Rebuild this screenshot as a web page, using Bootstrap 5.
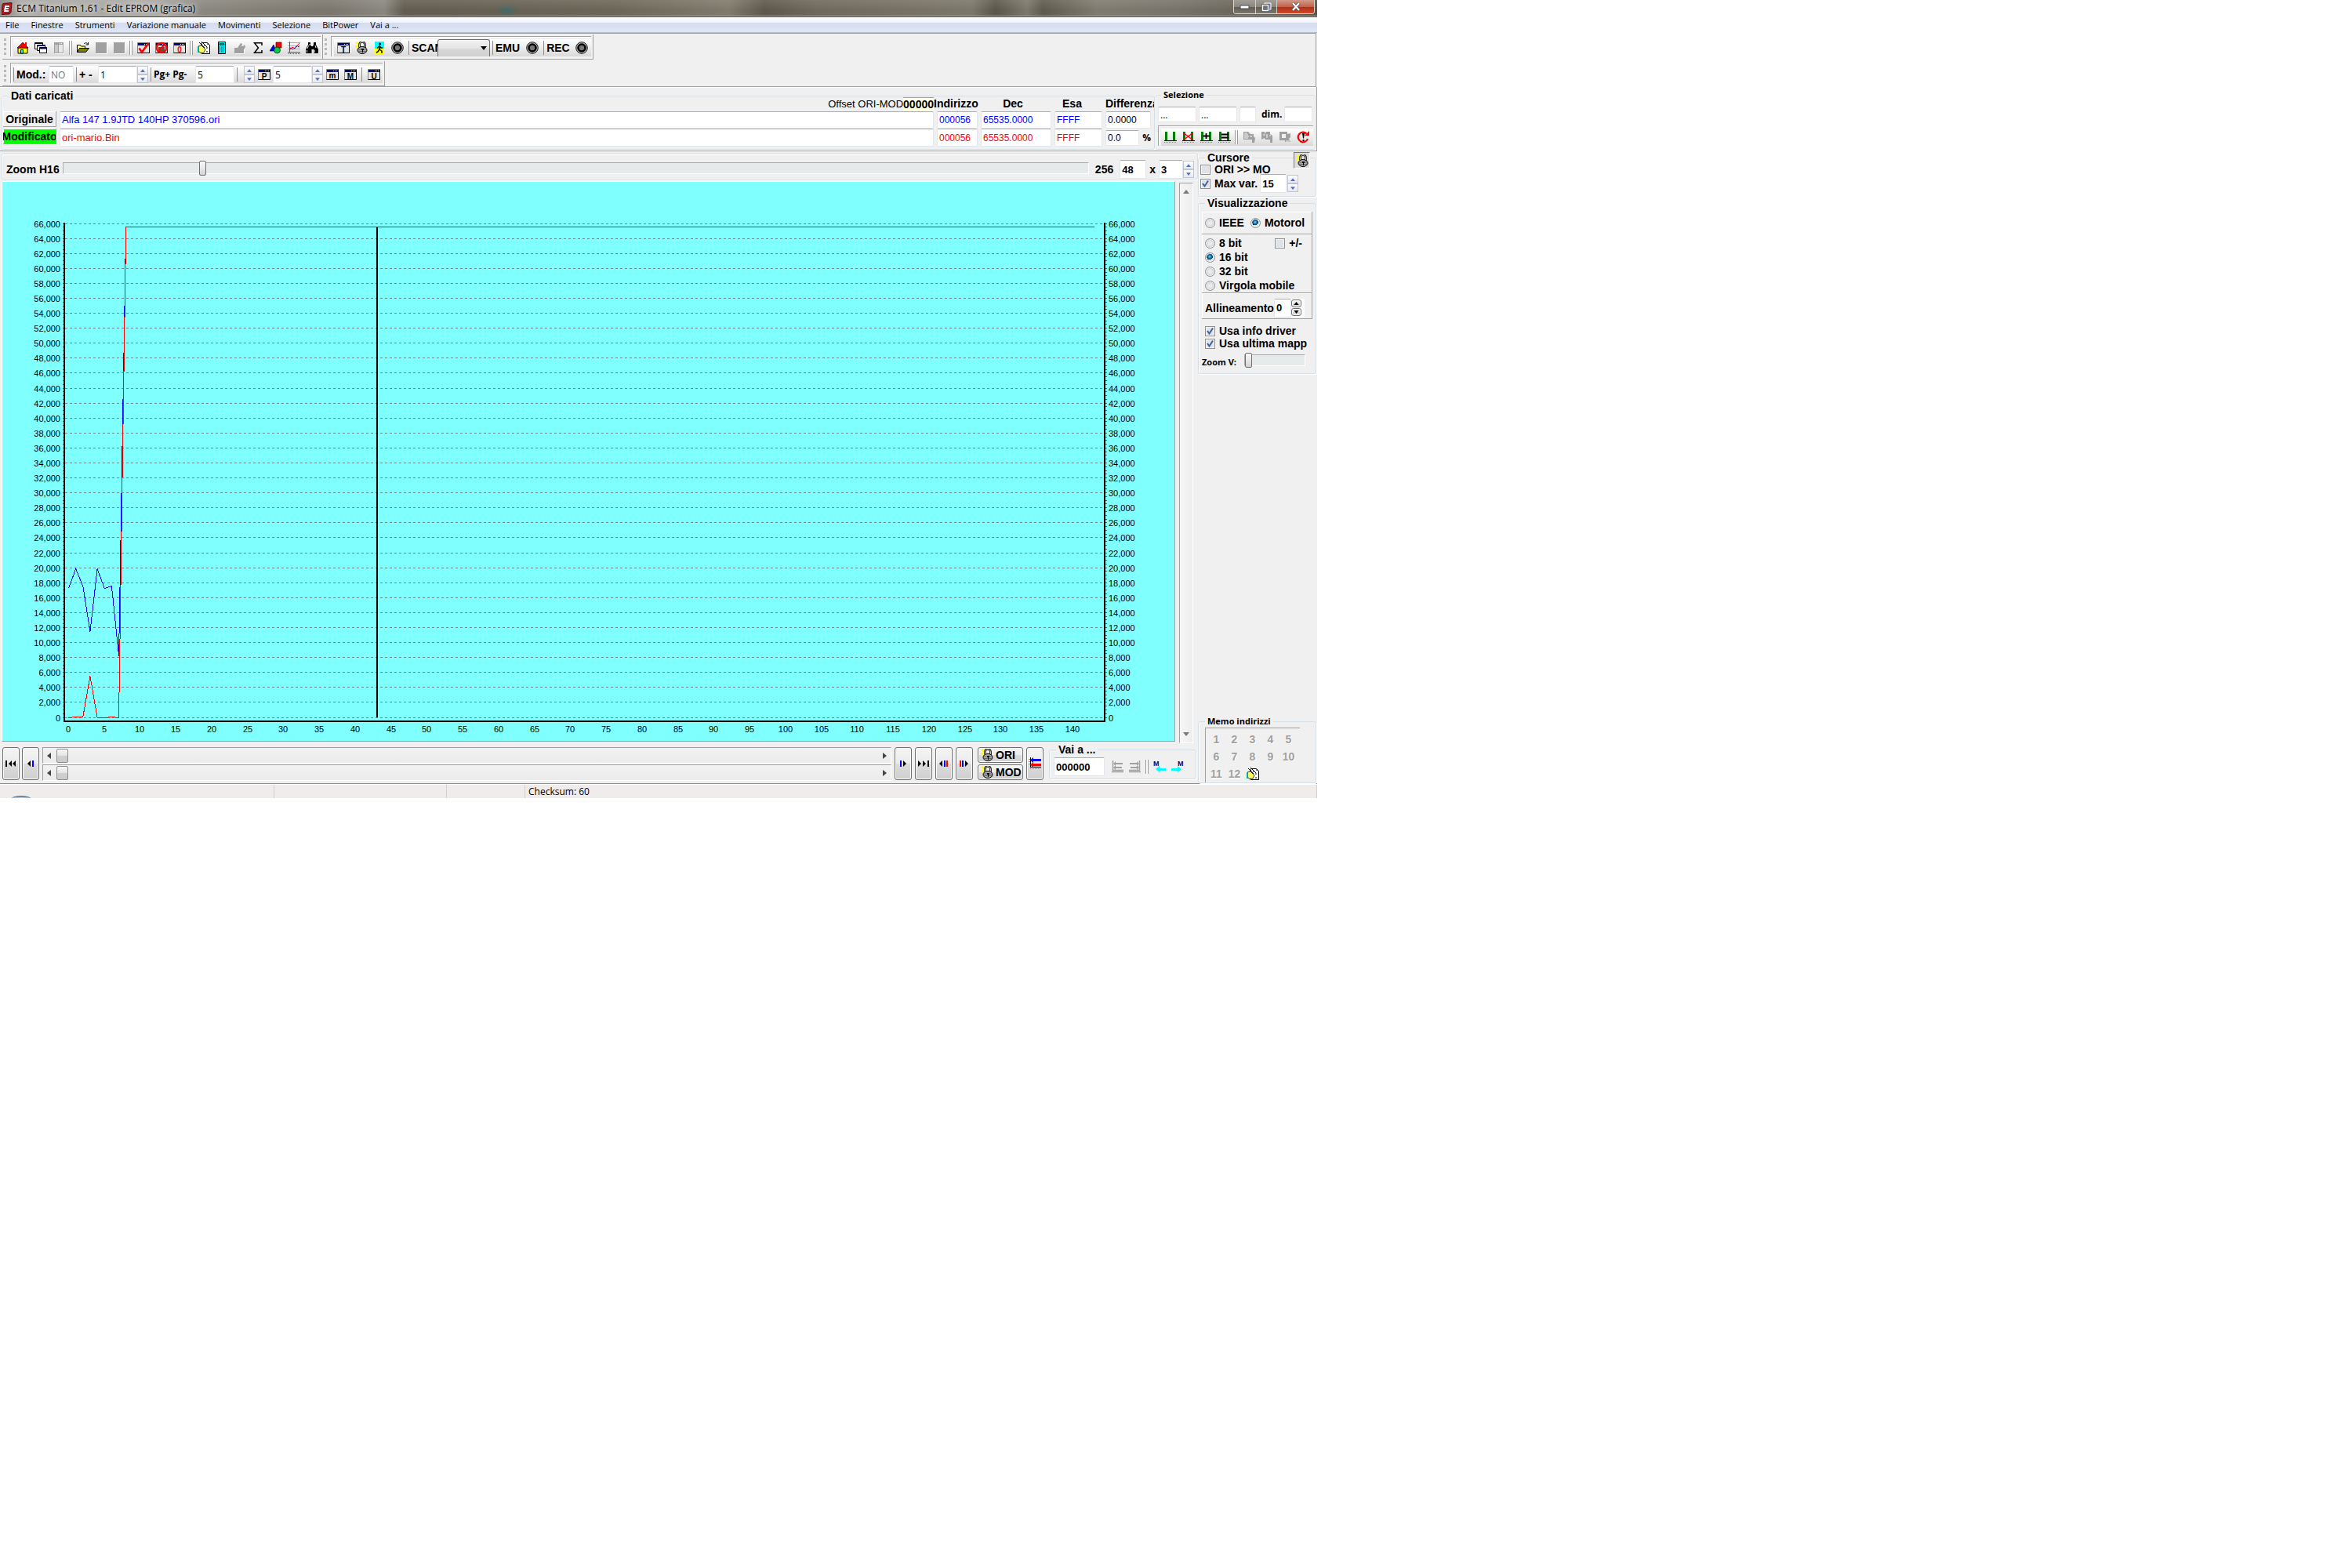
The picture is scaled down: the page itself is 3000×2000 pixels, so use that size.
<!DOCTYPE html>
<html lang="it">
<head>
<meta charset="utf-8">
<meta name="viewport" content="width=device-width, initial-scale=1">
<title>ECM Titanium 1.61 - Edit EPROM (grafica)</title>
<link href="https://cdn.jsdelivr.net/npm/bootstrap@5.3.0/dist/css/bootstrap.min.css" rel="stylesheet">
<style>
:root{--face:#f0f0f0;--edge:#a0a0a0;--groove:#d5dfe5;--bitmap:"Liberation Sans",Arial,sans-serif;--ui:"Open Sans","Noto Sans",sans-serif}
body{background:#fff;color:#000;font:bold 14px/16px var(--bitmap)}
button,input,select{font:inherit;color:inherit;border-radius:0}
.ecm-window{width:56%;background:var(--face)}
/* title bar */
.titlebar{height:22px;border-bottom:1px solid #33312c;font:12px/21px var(--ui);padding-left:2px;
 background:linear-gradient(#ffffff1a 0 0,#0000 60%),radial-gradient(ellipse 14px 8px at 646px 13px,#3f6a68,#0000),linear-gradient(90deg,#8d8a85 0,#aaa9a4 30px,#a8a6a1 200px,#8a877f 260px,#7b776e 420px,#8a877f 490px,#625d50 515px,#6b6658 780px,#7f7a6c 930px,#5d584b 975px,#6e695c 1040px,#7b7769 1240px,#5a5649 1270px,#7c786b 1310px,#5e5a4d 1330px,#807b6f 1400px,#77736a 1500px,#5b5649 100%);box-shadow:inset 0 -1px #c6c4bc}
.titlebar .caption{text-shadow:0 0 6px #fff,0 0 6px #ddd;margin-left:5px}
.winbtns{margin-right:3px;height:18px;border:1px solid #d9d7d0;border-top:0;border-radius:0 0 4px 4px;overflow:hidden;background:#444}
.winbtns button{width:28px;border:0;border-right:1px solid #d0cec6;background:linear-gradient(#a09d94,#8b887f 50%,#605c52 52%,#7b776c);padding:0;line-height:0}
.winbtns button:nth-child(2){width:27px}
.winbtns button.closer{width:47px;border:0;background:linear-gradient(#d09a8a,#c4624a 50%,#b32d12 52%,#cf4a2c)}
/* menu */
.menubar{height:20px;padding-left:7px;gap:15px;background:linear-gradient(#fff 0,#eef2fb 35%,#d5dcef 40%,#dfe6f7 100%);border-bottom:1px solid #b3bac9;font:11px/19px var(--ui)}
.menubar a{color:#000;text-decoration:none}
/* toolbars */
.toolzone{border:1px solid var(--edge);border-width:1px 1px 1px 0;margin-right:1px;padding:1px 0 0 3px;gap:2px}
.band{position:relative;padding:2px 2px 3px 10px;border:1px solid var(--edge);border-width:0 1px 1px 0}
.band::before{content:"";width:3px;margin:3px 5px 2px -8px;background:repeating-linear-gradient(#b8b8b8 0 3px,#0000 3px 6px)}
.band-in{border:1px solid var(--edge);border-width:1px 0 0 1px;box-shadow:inset 1px 1px #fff;padding:3px 0 0 3px}
.strip{height:22px;background:linear-gradient(#fff,#d9d9d9)}
.tb{width:23px;height:22px;padding:0;border:0;background:none;display:flex;align-items:center;justify-content:center;flex:none}
.tb svg,.tool svg,.mm svg{width:16px;height:16px}
.sep2{width:8px;height:18px;flex:none;background:linear-gradient(90deg,#0000 2px,#999 2px 3px,#fff 3px 5px,#999 5px 6px,#0000 6px)}
.sep1{width:1px;height:18px;background:#8c8c8c;flex:none;margin:0 3px}
.scan{width:33px;overflow:hidden}
.pick{width:67px;height:22px;padding:0;border:1px solid #707070;border-bottom:0;border-radius:3px 3px 0 0;background:linear-gradient(#f2f2f2,#e4e4e4 50%,#d8d8d8 52%,#d0d0d0);appearance:none}
.pickwrap{position:relative}
.pickwrap svg{position:absolute;right:4px;top:9px;width:8px;height:5px;pointer-events:none}
.field{background:#fff;border:1px solid #e2e7ee;border-top-color:#abadb3;padding:0 2px;font:13px/18px var(--bitmap);min-width:0;border-radius:2px}
.ui{font-family:var(--ui);font-size:12px}
.bar-field{height:22px;width:50px}
.spin{width:14px;flex:none}
.spin button{flex:1;padding:0;border:1px solid #c2c5cf;background:linear-gradient(#fdfdff,#e6e8f0);line-height:0;display:flex;align-items:center;justify-content:center;min-height:0}
.spin svg{width:6px;height:4px;fill:#5572b8}
/* group boxes */
.gbox{border:1px solid var(--groove);border-radius:3px;box-shadow:1px 1px #fff,inset 1px 0 #fff;min-width:0;position:relative}
.gbox>legend{float:none;width:auto;margin:0 0 0 8px;padding:0 3px;font:inherit;line-height:16px}
.gbox>legend.small-cap{font:bold 11px/14px var(--ui)}
.datapanel{border:1px solid var(--edge);border-width:0 1px 1px 0;box-shadow:inset 0 1px #fff;padding:3px 1px 1px 2px;gap:1px}
.datagrid{display:grid;grid-template-columns:68px minmax(0,1fr) 52px 90px 61px 58px;grid-template-rows:18px 22px 23px;column-gap:4px;margin-top:-6px;padding:0 4px 3px 1px}
.datagrid .field{width:100%;font-size:12px}
.datagrid .fname{font-size:13px}
.offs{justify-self:end;font-weight:normal;font-size:13px}
.offs b{font-size:14px;line-height:16px;background:#ffffe1;border-top:1px solid var(--edge);height:18px}
.tag{border:1px solid var(--edge);border-width:0 1px 1px 0;box-shadow:inset 1px 1px #fff;background:var(--face);padding:0;overflow:hidden;display:flex;align-items:center;justify-content:center;height:20px;margin-bottom:2px}
.tag.on{background:#0f0}
.blue{color:#00f}.red{color:#f00}
.selbox{width:204px;flex:none;padding:0 2px}
.selbox>legend{margin-left:4px}
/* sliders */
.slide{appearance:none;-webkit-appearance:none;height:20px;background:none;min-width:0;margin:0}
.slide::-webkit-slider-runnable-track{height:15px;background:#e7eaea;border:1px solid #fff;border-color:#a9acac #fff #fff #a9acac}
.slide::-webkit-slider-thumb{-webkit-appearance:none;width:9px;height:19px;margin-top:-3px;border:1px solid #707070;border-radius:2px;background:linear-gradient(#f8f8f8,#e8e8e8 50%,#d2d2d2)}
.zoomrow{margin:2px 0 0 2px;border:1px solid var(--groove);border-radius:3px;box-shadow:1px 1px #fff,inset 1px 1px #fff;height:34px;padding:8px 4px 0 5px}
.zoomrow .slide{margin-top:-3px}
.plotrow{padding:2px 6px 0 2px;gap:5px}
.plot{background:#80ffff;border:1px solid #fff;border-color:#fff var(--edge) var(--edge) #fff}
.plot svg{display:block;width:100%}
.plot text{font:11px var(--bitmap)}
.vbar{width:18px;flex:none;margin-top:2px;margin-bottom:-2px;border:1px solid var(--edge);border-color:var(--edge) #fff #fff var(--edge);background:linear-gradient(90deg,#f6f6f6,#ededed)}
.vbar button,.hbar button{border:0;background:none;padding:0;line-height:0}
.vbar svg{width:8px;height:5px;fill:#7a7a7a}
.navrow{padding:7px 2px 3px 3px;gap:4px}
.nb{padding:0;border:1px solid #707070;border-radius:3px;background:linear-gradient(#f4f4f4,#ebebeb 50%,#dcdcdc 51%,#cfcfcf);box-shadow:inset 0 0 0 1px #fafafa;display:flex;align-items:center;justify-content:center;overflow:hidden}
.nb.tall{width:22px;height:42px}
.nb.wide{width:58px;height:20px;gap:3px;padding-left:3px;justify-content:flex-start}
.nb.mini{width:13px;height:10px}
.nb svg{flex:none}
.hbar{height:21px;border:1px solid var(--edge);border-color:var(--edge) #fff #fff var(--edge);background:linear-gradient(#f2f2f2,#ebebeb);padding:0 5px}
.hbar svg{width:5px;height:8px;fill:#444}
.hthumb{width:15px;height:18px;border:1px solid #8e8e8e;border-radius:2px;background:linear-gradient(#f6f6f6,#e4e4e4 50%,#d0d0d0 52%,#cacaca);margin-left:7px}
.vai{width:188px;margin:-5px 0 0 3px}
/* side column */
.side{width:152px;flex:none}
.side .gbox{margin-right:1px}
.lockbtn{position:absolute;right:7px;top:-15px;width:21px;height:21px;padding:0;border:1px solid #777;border-color:#777 #fff #fff #777;background:#dedede;display:flex;align-items:center;justify-content:center}
.lockbtn svg{width:16px;height:16px}
.subp{border:1px solid var(--edge);border-width:0 1px 1px 0;box-shadow:inset 1px 1px #fff;padding-left:4px}
.form-check-input.ck{width:13px;height:13px;margin:0;flex:none;border:1px solid #8e8f8f;box-shadow:inset 0 0 0 1px #f4f4f4;background-color:#dfe2e6;border-radius:0;background-size:11px 11px}
.form-check-input.ck:checked{background-color:#dfe2e6;background-image:url("data:image/svg+xml,%3Csvg xmlns='http://www.w3.org/2000/svg' viewBox='0 0 11 11'%3E%3Cpath d='M2 5l2.500 3.500L9 1.500' fill='none' stroke='%23445fa5' stroke-width='2'/%3E%3C/svg%3E")}
.form-check-input.ck[type=radio]{border-radius:50%;background-image:radial-gradient(circle,#e9ebed 2px,#cdd0d3 5px)}
.form-check-input.ck[type=radio]:checked{background-image:radial-gradient(circle at 45% 40%,#8fd6f5 0,#1878b4 2px,#0b2f52 4px,#dfe3e6 4px)}
.opt{height:18px;gap:5px;white-space:nowrap}
.opt.tight{height:16px}
.cursor-rows{padding:0 3px 5px 2px}
.clipx{overflow:hidden;white-space:nowrap}
.memo{display:grid;grid-template-columns:repeat(5,23px);grid-auto-rows:22px;border:1px solid var(--edge);border-width:1px 0 0 1px;margin:1px 20px 0 8px;padding:3px 0 0 2px}
.mm{border:0;background:none;padding:0;color:#a0a0a0;text-shadow:1px 1px #fff;display:flex;align-items:center;justify-content:center}
.status{border-top:1px solid #8c8c8c;background:#f0ecec;height:19px;font:12px/17px var(--ui);box-shadow:inset 0 1px #fff}
.status>div{border-right:1px solid #d2cfcf;margin-top:1px}
.orb{width:24px;height:4px;border-radius:14px 14px 0 0/4px 4px 0 0;border-top:1px solid #33597f;background:#a9c4dc;margin:14px 0 0 15px}
</style>
<script src="https://cdn.jsdelivr.net/npm/bootstrap@5.3.0/dist/js/bootstrap.bundle.min.js"></script>
</head>
<body>
<svg class="d-none" xmlns="http://www.w3.org/2000/svg">
 <symbol id="i-home" viewBox="0 0 16 16"><path d="M2 8h12v7H2z" fill="#ff0" stroke="#000"/><path d="M8 1L1 8h14z" fill="#f00" stroke="#000" stroke-width=".6"/><path d="M11 1h2v4h-2z" fill="#f00"/><path d="M5.500 10.500h3v4.500h-3z" fill="#0ff" stroke="#000"/></symbol>
 <symbol id="i-wins" viewBox="0 0 16 16"><g fill="#fff" stroke="#000"><path d="M.5 1.500h10v8H.5z"/><path d="M3.500 4.500h10v7h-10z"/><path d="M6.500 7.500h9v7h-9z"/></g><path d="M1 2h9v1H1zM4 5h9v1H4zM7 8h8v1.500H7z" fill="#000080"/></symbol>
 <symbol id="i-gdoc" viewBox="0 0 16 16"><path d="M2 1h12v14H2z" fill="#a0a0a0"/><path d="M3 4h4v10H3z" fill="#c8c8c8"/><path d="M8 4h5v10H8z" fill="#e8e8e8"/><path d="M9 2h1v1H9zM11 2h1v1h-1z" fill="#fff"/><path d="M14.500 2v13.500H3" stroke="#fff" fill="none"/></symbol>
 <symbol id="i-open" viewBox="0 0 16 16"><path d="M.5 13.500v-9h4l1 1.500h5v3" fill="#ffff80" stroke="#000"/><path d="M.5 13.500l3-5h12l-4 5z" fill="#808000" stroke="#000"/><path d="M9 3c2-2 4-1.500 5 .5M14.500 1v3h-3" fill="none" stroke="#000"/></symbol>
 <symbol id="i-gray" viewBox="0 0 16 16"><path d="M1 1h14v14H1z" fill="#a0a0a0"/><path d="M15.500 2v13.500H2" stroke="#fff" fill="none"/></symbol>
 <symbol id="i-win" viewBox="0 0 16 16"><path d="M.5 1.500h15v13H.5z" fill="#e4e4e4" stroke="#808080"/><path d="M15.500 1.500v13H.5" fill="none" stroke="#000"/><path d="M1 2h14v3H1z" fill="#000080"/><path d="M9 3h1v1H9zM11 3h1v1h-1zM13 3h1v1h-1z" fill="#fff"/></symbol>
 <symbol id="i-check" viewBox="0 0 16 16"><use href="#i-win"/><path d="M2.500 8.500L6 13.500L14.500 2" fill="none" stroke="#f00" stroke-width="2.600"/></symbol>
 <symbol id="i-no" viewBox="0 0 16 16"><use href="#i-win"/><path d="M4 7h8v6H4z" fill="#804040"/><circle cx="8" cy="8" r="6.200" fill="none" stroke="#f00" stroke-width="2.200"/><path d="M12.500 3.500l-9 9" stroke="#f00" stroke-width="2.200"/></symbol>
 <symbol id="i-hand" viewBox="0 0 16 16"><path d="M5.500 1.500h7l3 3v11h-10z" fill="#fff" stroke="#000"/><path d="M8 5h2M11 8h2M8 11h1M11 13h2M12 3h2" stroke="#000"/><path d="M1 6l4-1 5 5-2 4-4 .5L1 12z" fill="#ffff60" stroke="#000" stroke-width=".8"/><path d="M2 1l7 7M5 0l7 7" stroke="#000"/><path d="M0 7h2v7H0z" fill="#0aa"/></symbol>
 <symbol id="i-calc" viewBox="0 0 16 16"><path d="M3.500.5h9v15h-9z" fill="#0ff" stroke="#000"/><path d="M5 2.500h6v2H5z" fill="#008080" stroke="#000" stroke-width=".6"/><path d="M5.500 6v8M8 6v8M10.500 6v8" stroke="#006080"/></symbol>
 <symbol id="i-tool" viewBox="0 0 16 16"><path d="M1 8h4l4-6 2 1-1 3h2l2-2 1 3-2 3v5H1z" fill="#a0a0a0"/><path d="M2 15.500h12M13.500 10v5" stroke="#fff"/></symbol>
 <symbol id="i-sum" viewBox="0 0 16 16"><path d="M13 5V1.700H3.500L8.500 8l-5 6.300H13V11" fill="none" stroke="#000" stroke-width="1.500"/></symbol>
 <symbol id="i-shapes" viewBox="0 0 16 16"><path d="M8 1h7v7H8z" fill="#f00" stroke="#000" stroke-width=".6"/><path d="M5 4L0 12h8z" fill="#00f" stroke="#000" stroke-width=".6"/><circle cx="9.500" cy="11" r="4" fill="#0c4" stroke="#000" stroke-width=".6"/></symbol>
 <symbol id="i-graph" viewBox="0 0 16 16"><path d="M0 1.500h16M0 5.500h16M0 9.500h16" stroke="#aaa"/><path d="M2.500 0v14.500M0 13.500h16" stroke="#555"/><path d="M2 11l4-4 3 2 6-7" stroke="#f00" fill="none"/><path d="M3 8l4 2 4-4 4 1" stroke="#00f" fill="none" stroke-dasharray="2 1"/><path d="M1 15.500h15" stroke="#555" stroke-dasharray="1 1"/></symbol>
 <symbol id="i-bino" viewBox="0 0 16 16"><path d="M3 1h3v3l1 2h2l1-2V1h3v3l3 6v5h-5.500v-5h-3v5H0v-5l3-6z" fill="#000"/><path d="M3.500 5L2 9M12 5l1 3M1.500 11v3M11 11v3M5 3v2" stroke="#fff" stroke-width=".9"/></symbol>
 <symbol id="i-lock" viewBox="0 0 16 16"><path d="M5 0v3M0 1l4 3M0 6h4M2 0l3 4M1 9l3-3" stroke="#ff0" stroke-width="1.300"/><path d="M5.500 7.500V4a3.500 3.500 0 017 0v4" fill="none" stroke="#000" stroke-width="2.600"/><path d="M5.500 7V4a3.500 3.500 0 017 0v4" fill="none" stroke="#ddd" stroke-width=".9"/><ellipse cx="9" cy="11" rx="6" ry="4.500" fill="#a8a8a8" stroke="#000"/><path d="M3.500 10h11M3.500 12.500h11" stroke="#555" stroke-width=".8"/><path d="M8 9h3v2h-1v3H9v-3H8z" fill="#000"/></symbol>
 <symbol id="i-walk" viewBox="0 0 16 16"><path d="M2 0h12v9H2z" fill="#0ff"/><path d="M2 9h12v7H2z" fill="#ff0"/><circle cx="8.500" cy="3" r="1.500"/><path d="M8 5v5l3 2v3M8 10l-2 3-2 1M8 5.500L5 8.500M8 5.500l2 2.500h2" fill="none" stroke="#000" stroke-width="1.400"/></symbol>
 <symbol id="i-disc" viewBox="0 0 16 16"><circle cx="8" cy="8" r="7.300" fill="#bbb" stroke="#000" stroke-width=".9"/><circle cx="8" cy="8" r="4.500" fill="#777" stroke="#000" stroke-width="2.600"/></symbol>
 <symbol id="i-sel" viewBox="0 0 16 16"><path d="M1 1h3v11H1zM11 1h3v11h-3z" fill="#008000"/><path d="M0 12.500h16" stroke="#000"/><path d="M0 14.500h16" stroke="#888" stroke-dasharray="1 1"/></symbol>
 <symbol id="i-selx" viewBox="0 0 16 16"><use href="#i-sel"/><path d="M1 2l13 10M14 2L1 12" stroke="#f00" stroke-width="1.400"/></symbol>
 <symbol id="i-selp" viewBox="0 0 16 16"><use href="#i-sel"/><path d="M3 6.500h9M7.500 3v7" stroke="#000" stroke-width="1.800"/></symbol>
 <symbol id="i-sele" viewBox="0 0 16 16"><use href="#i-sel"/><path d="M4 4.500h9M4 8.500h9" stroke="#000" stroke-width="1.800"/></symbol>
 <symbol id="i-g1" viewBox="0 0 16 16"><path d="M1 1h6l3 3h4v3l2 2-1 6h-3v-4H1z" fill="#a0a0a0"/><path d="M2 3h4M2 5h5M2 7h6M2 9h5M9 7h3" stroke="#f4f4f4"/></symbol>
 <symbol id="i-g2" viewBox="0 0 16 16"><path d="M1 1h4v3l2-3h5v3l3 2v9h-3v-4H6l-1-2-4 2z" fill="#a0a0a0"/><path d="M3 5h3M8 4v5M11 6h2" stroke="#f4f4f4"/></symbol>
 <symbol id="i-g3" viewBox="0 0 16 16"><path d="M1 1h10v3l4-1v5l-2 2 2 4H8v-2H1z" fill="#a0a0a0"/><path d="M4 4h5v5H4z" fill="#f0f0f0"/><path d="M9 13h5" stroke="#f4f4f4"/></symbol>
 <symbol id="i-ref" viewBox="0 0 16 16"><path d="M12.500 3.500A6.300 6.300 0 1014 10" fill="none" stroke="#f00" stroke-width="2.200"/><path d="M10 6h6V0z" fill="#f00"/><path d="M7 3h3L9 9.500H8zM7.500 11h2v2h-2z" fill="#000"/></symbol>
 <symbol id="i-cmp" viewBox="0 0 16 16"><path d="M2.500 0v13M2 12.500h14" stroke="#000"/><path d="M0 2.500h2M0 5.500h2M0 8.500h2" stroke="#888"/><path d="M2 14.500h14" stroke="#888" stroke-dasharray="1 1"/><path d="M2 3.500l4-3.500v2h10v3H6v2z" fill="#00f"/><path d="M2 9.500L6 6v2h10v3H6v2z" fill="#f00"/></symbol>
 <symbol id="i-gl" viewBox="0 0 16 16"><path d="M2.500 0v12.500H16M1 14.500h15" stroke="#a0a0a0" stroke-width="1.500" fill="none"/><path d="M3 4l3-3v2h9v2H6v2zM3 9l3-3v2h8v2H6v2z" fill="#a0a0a0"/></symbol>
 <symbol id="i-gr" viewBox="0 0 16 16"><path d="M13.500 0v12.500H0M0 14.500h15" stroke="#a0a0a0" stroke-width="1.500" fill="none"/><path d="M13 4l-3-3v2H1v2h9v2zM13 9l-3-3v2H2v2h8v2z" fill="#a0a0a0"/></symbol>
 <symbol id="i-up" viewBox="0 0 8 5"><path d="M4 0l4 5H0z"/></symbol>
 <symbol id="i-dn" viewBox="0 0 8 5"><path d="M4 5l4-5H0z"/></symbol>
</svg>

<main class="ecm-window">
 <header class="titlebar d-flex align-items-start justify-content-between">
  <div class="d-flex align-items-center">
   <svg width="14" height="16" viewBox="0 0 14 16"><path d="M2 1.500l11-1-1 12-2 2.500-10 .5 1-12z" fill="#b3181c" stroke="#5a1012"/><path d="M10 5H5L4 11h5M5 8h4" fill="none" stroke="#fff" stroke-width="1.800"/></svg>
   <span class="caption">ECM Titanium 1.61 - Edit EPROM (grafica)</span>
  </div>
  <div class="winbtns d-flex">
   <button aria-label="Riduci"><svg width="13" height="6"><path d="M1 1h11v4H1z" fill="#fff" stroke="#444b5c"/></svg></button>
   <button aria-label="Ripristina"><svg width="13" height="12"><path d="M4 1h8v8H4z" fill="#888" stroke="#fff"/><path d="M1.500 3.500h7v7h-7z" fill="#777" stroke="#444b5c" stroke-width="3"/><path d="M1.500 3.500h7v7h-7z" fill="none" stroke="#fff" stroke-width="1.600"/></svg></button>
   <button class="closer" aria-label="Chiudi"><svg width="12" height="11"><path d="M2 1l8 9M10 1L2 10" stroke="#444b5c" stroke-width="4"/><path d="M2 1l8 9M10 1L2 10" stroke="#fff" stroke-width="2.400"/></svg></button>
  </div>
 </header>
 <nav class="menubar d-flex" aria-label="Menu">
  <a href="#">File</a><a href="#">Finestre</a><a href="#">Strumenti</a><a href="#">Variazione manuale</a><a href="#">Movimenti</a><a href="#">Selezione</a><a href="#">BitPower</a><a href="#">Vai a ...</a>
 </nav>

 <section class="toolzone d-flex flex-column align-items-start">
  <div class="d-flex">
   <div class="band d-flex"><div class="band-in"><div class="strip d-flex align-items-center">
    <button class="tb" aria-label="Home"><svg><use href="#i-home"/></svg></button><button class="tb" aria-label="Finestre"><svg><use href="#i-wins"/></svg></button><button class="tb" aria-label="Pannello" disabled><svg><use href="#i-gdoc"/></svg></button><i class="sep2"></i>
    <button class="tb" aria-label="Apri"><svg><use href="#i-open"/></svg></button><button class="tb" aria-label="Salva" disabled><svg><use href="#i-gray"/></svg></button><button class="tb" aria-label="Salva tutto" disabled><svg><use href="#i-gray"/></svg></button><i class="sep2"></i>
    <button class="tb" aria-label="Conferma"><svg><use href="#i-check"/></svg></button><button class="tb" aria-label="Annulla"><svg><use href="#i-no"/></svg></button><button class="tb" aria-label="Originale"><svg viewBox="0 0 16 16"><use href="#i-win"/><text x="8" y="14" text-anchor="middle" font-size="10" fill="#f00">0</text></svg></button><i class="sep2"></i>
    <button class="tb" aria-label="Note"><svg><use href="#i-hand"/></svg></button><button class="tb" aria-label="Calcolatrice"><svg><use href="#i-calc"/></svg></button><button class="tb" aria-label="Modulo" disabled><svg><use href="#i-tool"/></svg></button><button class="tb" aria-label="Checksum"><svg><use href="#i-sum"/></svg></button><button class="tb" aria-label="Forme"><svg><use href="#i-shapes"/></svg></button><button class="tb" aria-label="Grafico"><svg><use href="#i-graph"/></svg></button><button class="tb" aria-label="Cerca"><svg><use href="#i-bino"/></svg></button>
   </div></div></div>
   <div class="band d-flex"><div class="band-in"><div class="strip d-flex align-items-center">
    <button class="tb" aria-label="Tabella"><svg viewBox="0 0 16 16"><use href="#i-win"/><text x="8" y="14" text-anchor="middle" font-size="10">T</text></svg></button><button class="tb" aria-label="Blocco"><svg><use href="#i-lock"/></svg></button><button class="tb" aria-label="Esegui"><svg><use href="#i-walk"/></svg></button><button class="tb" aria-label="Disco"><svg><use href="#i-disc"/></svg></button>
    <i class="sep1"></i><label for="scan" class="scan">SCAN</label><span class="pickwrap"><select id="scan" class="pick"><option></option></select><svg><use href="#i-dn"/></svg></span>
    <i class="sep1"></i><span>EMU</span><button class="tb ms-1" aria-label="EMU"><svg><use href="#i-disc"/></svg></button><i class="sep1"></i><span>REC</span><button class="tb ms-1" aria-label="REC"><svg><use href="#i-disc"/></svg></button>
   </div></div></div>
  </div>
  <div class="band d-flex"><div class="band-in"><div class="strip d-flex align-items-center">
    <i class="sep1 ms-0"></i><label for="mod" style="width:41px">Mod.:</label><input id="mod" class="field ui bar-field text-secondary" style="width:32px" value="NO">
    <i class="sep1"></i><label for="stp" style="width:24px">+ -</label><input id="stp" class="field ui bar-field" value="1">
    <span class="spin d-flex flex-column h-100"><button aria-label="su"><svg><use href="#i-up"/></svg></button><button aria-label="giù"><svg><use href="#i-dn"/></svg></button></span>
    <i class="sep1"></i><label for="pg" class="ui text-nowrap" style="width:53px">Pg+ Pg-</label><input id="pg" class="field ui bar-field" value="5">
    <i class="sep1 me-2"></i><span class="spin d-flex flex-column h-100"><button aria-label="su"><svg><use href="#i-up"/></svg></button><button aria-label="giù"><svg><use href="#i-dn"/></svg></button></span>
    <button class="tb" aria-label="Pagina"><svg viewBox="0 0 16 16"><use href="#i-win"/><text x="8" y="14" text-anchor="middle" font-size="10">P</text></svg></button><input aria-label="Pagina" class="field ui bar-field" value="5">
    <span class="spin d-flex flex-column h-100"><button aria-label="su"><svg><use href="#i-up"/></svg></button><button aria-label="giù"><svg><use href="#i-dn"/></svg></button></span>
    <button class="tb" aria-label="m"><svg viewBox="0 0 16 16"><use href="#i-win"/><text x="8" y="13" text-anchor="middle" font-size="10">m</text></svg></button><button class="tb" aria-label="M"><svg viewBox="0 0 16 16"><use href="#i-win"/><text x="8" y="14" text-anchor="middle" font-size="10">M</text></svg></button>
    <i class="sep1"></i><button class="tb" aria-label="U"><svg viewBox="0 0 16 16"><use href="#i-win"/><text x="8" y="14" text-anchor="middle" font-size="10">U</text></svg></button>
  </div></div></div>
 </section>

 <section class="datapanel d-flex">
  <fieldset class="gbox flex-grow-1"><legend>Dati caricati</legend>
   <div class="datagrid">
    <span></span><span class="offs d-flex align-items-center">Offset ORI-MOD <b>00000</b></span><span class="text-nowrap" style="margin-left:-4px">Indirizzo</span><span class="text-center pe-2">Dec</span><span class="text-center pe-3">Esa</span><span class="clipx" style="margin-right:-4px">Differenza</span>
    <button class="tag">Originale</button><input class="field fname blue" aria-label="File originale" value="Alfa 147 1.9JTD 140HP 370596.ori"><input class="field blue" aria-label="Indirizzo originale" value="000056"><input class="field blue" aria-label="Dec originale" value="65535.0000"><input class="field blue" aria-label="Esa originale" value="FFFF"><input class="field" aria-label="Differenza" value="0.0000">
    <button class="tag on">Modificato</button><input class="field fname red" aria-label="File modificato" value="ori-mario.Bin"><input class="field red" aria-label="Indirizzo modificato" value="000056"><input class="field red" aria-label="Dec modificato" value="65535.0000"><input class="field red" aria-label="Esa modificato" value="FFFF"><span class="d-flex align-items-center"><input class="field" aria-label="Differenza percentuale" value="0.0"><span class="ui ms-1">%</span></span>
   </div>
  </fieldset>
  <fieldset class="gbox selbox"><legend class="small-cap">Selezione</legend>
   <div class="d-flex align-items-center mt-2" style="gap:3px"><input class="field ui" style="width:49px;height:20px" aria-label="Inizio" value="..."><input class="field ui" style="width:49px;height:20px" aria-label="Fine" value="..."><input class="field ui" style="width:21px;height:20px" aria-label="Righe"><label for="dim" class="ui ms-1">dim.</label><input id="dim" class="field ui" style="width:36px;height:20px"></div>
   <div class="band-in mt-1"><div class="strip d-flex align-items-center">
    <button class="tb" aria-label="Seleziona"><svg><use href="#i-sel"/></svg></button><button class="tb" aria-label="Deseleziona"><svg><use href="#i-selx"/></svg></button><button class="tb" aria-label="Aggiungi"><svg><use href="#i-selp"/></svg></button><button class="tb" aria-label="Uguale"><svg><use href="#i-sele"/></svg></button><i class="sep2"></i><button class="tb" aria-label="Copia" disabled><svg><use href="#i-g1"/></svg></button><button class="tb" aria-label="Incolla" disabled><svg><use href="#i-g2"/></svg></button><button class="tb" aria-label="Riempi" disabled><svg><use href="#i-g3"/></svg></button><button class="tb" aria-label="Ripristina"><svg><use href="#i-ref"/></svg></button>
   </div></div>
  </fieldset>
 </section>

 <div class="d-flex">
  <div class="flex-grow-1" style="min-width:0">
   <div class="zoomrow d-flex align-items-center">
    <label for="zh" class="text-nowrap">Zoom H16</label><input id="zh" type="range" class="slide flex-grow-1 ms-1" min="0" max="120" value="16">
    <span class="mx-2">256</span><input class="field fw-bold" style="width:34px;height:24px" aria-label="Colonne" value="48"><span class="mx-1">x</span><input class="field fw-bold" style="width:31px;height:24px" aria-label="Righe" value="3">
    <span class="spin d-flex flex-column" style="height:22px"><button aria-label="su"><svg><use href="#i-up"/></svg></button><button aria-label="giù"><svg><use href="#i-dn"/></svg></button></span>
   </div>
   <div class="plotrow d-flex">
    <div class="plot flex-grow-1"><svg id="chart" viewBox="0 0 1495 713" role="img" aria-label="Grafico EPROM"></svg></div>
    <div class="vbar d-flex flex-column justify-content-between py-2"><button aria-label="Su"><svg><use href="#i-up"/></svg></button><button aria-label="Giù"><svg><use href="#i-dn"/></svg></button></div>
   </div>
   <div class="navrow d-flex align-items-start">
    <div class="d-flex" style="gap:3px">
     <button class="nb tall" aria-label="Inizio"><svg width="14" height="8"><path d="M0 0h2v8H0zM8 0v8L4 4zM13 0v8L9 4z"/></svg></button>
     <button class="nb tall" aria-label="Indietro"><svg width="9" height="8"><path d="M4 0v8L0 4z"/><path d="M6 0h2v8H6z" fill="#00f"/></svg></button>
    </div>
    <div class="flex-grow-1">
     <div class="hbar d-flex align-items-center"><button aria-label="Sinistra"><svg viewBox="0 0 5 8"><path d="M5 0v8L0 4z"/></svg></button><i class="hthumb"></i><button class="ms-auto" aria-label="Destra"><svg viewBox="0 0 5 8"><path d="M0 0v8l5-4z"/></svg></button></div>
     <div class="hbar d-flex align-items-center" style="margin-top:1px"><button aria-label="Sinistra"><svg viewBox="0 0 5 8"><path d="M5 0v8L0 4z"/></svg></button><i class="hthumb"></i><button class="ms-auto" aria-label="Destra"><svg viewBox="0 0 5 8"><path d="M0 0v8l5-4z"/></svg></button></div>
    </div>
    <button class="nb tall" aria-label="Avanti"><svg width="9" height="8"><path d="M0 0h2v8H0z" fill="#00f"/><path d="M4 0v8l4-4z"/></svg></button>
    <button class="nb tall" aria-label="Fine"><svg width="14" height="8"><path d="M0 0v8l4-4zM6 0v8l4-4zM12 0h2v8h-2z"/></svg></button>
    <button class="nb tall" aria-label="Differenza precedente"><svg width="12" height="8"><path d="M4 0v8L0 4z"/><path d="M6 0h2v8H6z" fill="#00f"/><path d="M9 0h2v8H9z" fill="#f00"/></svg></button>
    <button class="nb tall" aria-label="Differenza successiva"><svg width="12" height="8"><path d="M0 0h2v8H0z" fill="#f00"/><path d="M3 0h2v8H3z" fill="#00f"/><path d="M7 0v8l4-4z"/></svg></button>
    <div class="d-flex flex-column" style="gap:2px;margin-left:2px"><button class="nb wide"><svg width="16" height="16"><use href="#i-lock"/></svg>ORI</button><button class="nb wide"><svg width="16" height="16"><use href="#i-lock"/></svg>MOD</button></div>
    <button class="nb tall" aria-label="Confronta"><svg width="16" height="16"><use href="#i-cmp"/></svg></button>
    <fieldset class="gbox vai"><legend>Vai a ...</legend>
     <div class="d-flex align-items-center tool" style="padding:2px 4px 3px 5px">
      <input class="field fw-bold" style="width:65px;height:24px" aria-label="Vai a" value="000000">
      <button class="tb ms-1" aria-label="Indietro" disabled><svg><use href="#i-gl"/></svg></button><button class="tb" aria-label="Avanti" disabled><svg><use href="#i-gr"/></svg></button><i class="sep2"></i>
      <button class="tb" aria-label="Mappa precedente"><svg viewBox="0 0 16 16"><text x="0" y="7" font-size="9" fill="#000080">M</text><path d="M3 11l5-4v3h8v3H8v2z" fill="#0ff"/></svg></button><button class="tb" aria-label="Mappa successiva"><svg viewBox="0 0 16 16"><text x="8" y="7" font-size="9" fill="#000080">M</text><path d="M13 11L8 7v3H0v3h8v2z" fill="#0ff"/></svg></button>
     </div>
    </fieldset>
   </div>
  </div>

  <aside class="side d-flex flex-column">
   <fieldset class="gbox"><legend>Cursore</legend>
    <button class="lockbtn" aria-label="Blocca cursore"><svg><use href="#i-lock"/></svg></button>
    <div class="cursor-rows">
     <div class="d-flex align-items-center opt" style="height:14px"><input class="form-check-input ck" type="checkbox" id="c1"><label for="c1">ORI &gt;&gt; MO</label></div>
     <div class="d-flex align-items-center opt" style="height:22px"><input class="form-check-input ck" type="checkbox" id="c2" checked><label for="c2">Max var.</label><input class="field fw-bold" style="width:34px;height:24px;margin-left:-2px" aria-label="Max var." value="15"><span class="spin d-flex flex-column" style="height:22px;margin-left:-4px"><button aria-label="su"><svg><use href="#i-up"/></svg></button><button aria-label="giù"><svg><use href="#i-dn"/></svg></button></span></div>
    </div>
   </fieldset>
   <fieldset class="gbox"><legend>Visualizzazione</legend>
    <div style="padding:3px 4px 7px">
     <div class="subp d-flex align-items-center" style="height:29px;gap:8px">
      <div class="d-flex align-items-center opt"><input class="form-check-input ck" type="radio" name="fmt" id="r1"><label for="r1">IEEE</label></div>
      <div class="d-flex align-items-center opt"><input class="form-check-input ck" type="radio" name="fmt" id="r2" checked><label for="r2">Motorol</label></div>
     </div>
     <div class="subp" style="padding-top:2px">
      <div class="d-flex justify-content-between"><div class="d-flex align-items-center opt"><input class="form-check-input ck" type="radio" name="bit" id="b8"><label for="b8">8 bit</label></div><div class="d-flex align-items-center opt pe-2 me-1"><input class="form-check-input ck" type="checkbox" id="pm"><label for="pm">+/-</label></div></div>
      <div class="d-flex align-items-center opt"><input class="form-check-input ck" type="radio" name="bit" id="b16" checked><label for="b16">16 bit</label></div>
      <div class="d-flex align-items-center opt"><input class="form-check-input ck" type="radio" name="bit" id="b32"><label for="b32">32 bit</label></div>
      <div class="d-flex align-items-center opt"><input class="form-check-input ck" type="radio" name="bit" id="bv"><label for="bv">Virgola mobile</label></div>
     </div>
     <div class="subp d-flex align-items-center" style="height:33px;padding-top:5px"><label for="al">Allineamento</label><input id="al" class="field fw-bold" style="width:22px;height:24px" value="0"><span class="d-flex flex-column justify-content-center bg-white pe-1" style="height:24px;gap:1px"><button class="nb mini" aria-label="su"><svg width="7" height="4"><use href="#i-up"/></svg></button><button class="nb mini" aria-label="giù"><svg width="7" height="4"><use href="#i-dn"/></svg></button></span></div>
     <div class="ps-1" style="padding-top:7px">
      <div class="d-flex align-items-center opt tight"><input class="form-check-input ck" type="checkbox" id="u1" checked><label for="u1">Usa info driver</label></div>
      <div class="d-flex align-items-center opt tight"><input class="form-check-input ck" type="checkbox" id="u2" checked><label for="u2" class="clipx">Usa ultima mapp</label></div>
     </div>
     <div class="d-flex align-items-end" style="padding-top:3px"><label for="zv" class="text-nowrap" style="font:bold 11px/14px var(--ui);width:54px">Zoom V:</label><input id="zv" type="range" class="slide" style="width:78px" min="0" max="100" value="0"></div>
    </div>
   </fieldset>
   <fieldset class="gbox mt-auto"><legend class="small-cap">Memo indirizzi</legend>
    <div class="memo"><button class="mm">1</button><button class="mm">2</button><button class="mm">3</button><button class="mm">4</button><button class="mm">5</button><button class="mm">6</button><button class="mm">7</button><button class="mm">8</button><button class="mm">9</button><button class="mm">10</button><button class="mm">11</button><button class="mm">12</button><button class="mm" aria-label="Note"><svg><use href="#i-hand"/></svg></button></div>
   </fieldset>
  </aside>
 </div>

 <footer class="status d-flex overflow-hidden">
  <div style="width:350px"><i class="orb d-block"></i></div><div style="width:220px"></div><div style="width:100px"></div><div class="flex-grow-1 ps-1">Checksum: 60</div>
 </footer>
</main>

<script>
// Draws the EPROM curves, axes and cursor into the plot
(function(){
 var X=function(i){return 84.5+i*9.149}, Y=function(v){return Math.round(683.5-v*630/66000)-.5};
 var L=79, R=1406, s='<g shape-rendering="crispEdges">', t='', v, i;
 for(v=0;v<=66000;v+=2000){
  s+='<path d="M'+(L+1)+' '+Y(v)+'H'+R+'" stroke="#808080" stroke-dasharray="3 3"/>';
  var n=v.toLocaleString('en-US');
  t+='<text x="74" y="'+(Y(v)+4)+'" text-anchor="end">'+n+'</text><text x="1411" y="'+(Y(v)+4)+'">'+n+'</text>';
 }
 for(v=0;v<=66000;v+=500) s+='<path d="M'+(L-2)+' '+Y(v)+'h2M'+(R+1)+' '+Y(v)+'h2" stroke="#606060"/>';
 for(i=0;i<=140;i+=5) t+='<text x="'+Math.floor(X(i))+'" y="702" text-anchor="middle">'+i+'</text>';
 s+='<path d="M'+L+' 52V688H'+R+'V52" fill="none" stroke="#000" stroke-width="2"/>';
 var ori=[17200,19850,17600,11500,19850,17200,17500,8200,65535], mod=[0,100,100,5500,0,0,100,0,65535];
 var line=function(d,c){return '<polyline fill="none" stroke="'+c+'" points="'+d.map(function(v,i){return X(i)+','+Y(v)}).join(' ')+' '+X(143)+','+Y(65535)+'"/>'};
 s+=line(ori,'#00f')+line(mod,'#f00');
 s+='<path d="M478 '+Y(65535)+'V683" stroke="#000" stroke-width="2"/></g>';
 document.getElementById('chart').innerHTML=s+t;
})();
</script>
</body>
</html>
